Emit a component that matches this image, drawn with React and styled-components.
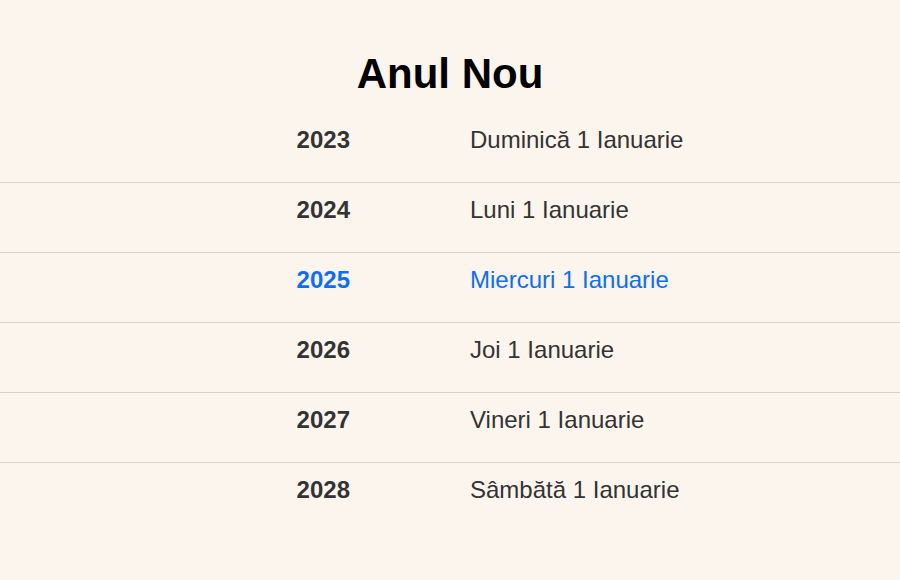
import React from "react";
import styled, { createGlobalStyle } from "styled-components";

const GlobalStyle = createGlobalStyle`
  html, body {
    margin: 0;
    padding: 0;
    background: #fcf5ee;
  }
  body {
    font-family: "Liberation Sans", Arial, sans-serif;
    min-height: 580px;
  }
`;

const Page = styled.main`
  padding-top: 50px;
  background: #fcf5ee;
  min-height: 530px;
`;

const Title = styled.h1`
  margin: 0 0 15px;
  text-align: center;
  font-size: 42px;
  line-height: 48px;
  font-weight: 700;
  color: #000;
`;

const List = styled.div`
  display: flex;
  flex-direction: column;
`;

const Row = styled.div`
  display: grid;
  grid-template-columns: 1fr 1fr;
  padding: 13px 0 29px;
  font-size: 24px;
  line-height: 27px;
  color: ${(p) => (p.$current ? "#0d6efd" : "#333333")};
  border-bottom: 1px solid #ddd1c4;
  &:last-child {
    border-bottom: none;
  }
`;

const Year = styled.span`
  justify-self: end;
  padding-right: 100px;
  font-weight: 700;
`;

const DateText = styled.span`
  padding-left: 20px;
`;

const rows = [
  { year: 2023, text: "Duminică 1 Ianuarie" },
  { year: 2024, text: "Luni 1 Ianuarie" },
  { year: 2025, text: "Miercuri 1 Ianuarie", current: true },
  { year: 2026, text: "Joi 1 Ianuarie" },
  { year: 2027, text: "Vineri 1 Ianuarie" },
  { year: 2028, text: "Sâmbătă 1 Ianuarie" },
];

export default function App() {
  return (
    <>
      <GlobalStyle />
      <Page>
        <Title>Anul Nou</Title>
        <List>
          {rows.map((r) => (
            <Row key={r.year} $current={r.current}>
              <Year>{r.year}</Year>
              <DateText>{r.text}</DateText>
            </Row>
          ))}
        </List>
      </Page>
    </>
  );
}
